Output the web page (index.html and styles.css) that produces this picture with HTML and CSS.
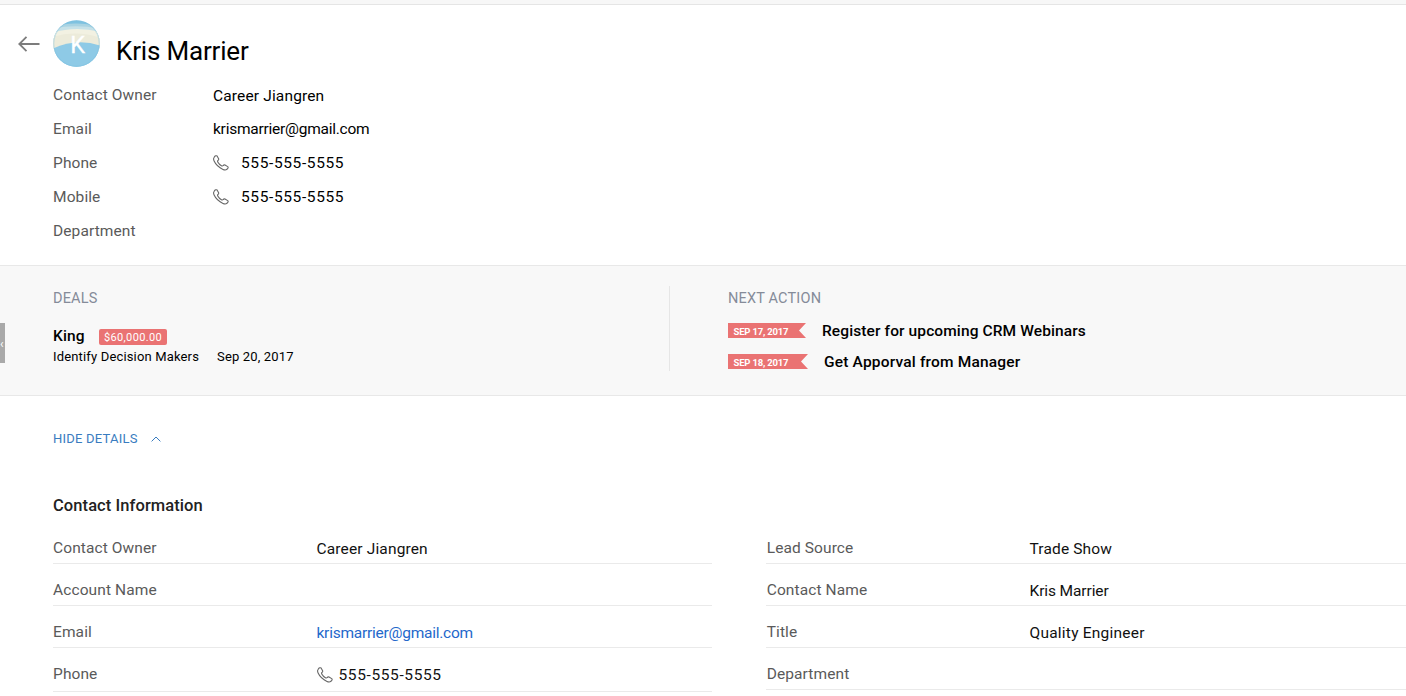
FILE: index.html
```html
<!DOCTYPE html>
<html lang="en">
<head>
<meta charset="utf-8">
<title>Kris Marrier</title>
<link rel="stylesheet" href="styles.css">
</head>
<body>
<svg class="defs" width="0" height="0" aria-hidden="true">
  <symbol id="phone" viewBox="0 0 16 16">
    <path d="M1.200 2.200C2 .9 3.400.3 4.100 1l1.500 2.700c.4.8-.1 1.300-.7 1.800-.6.5-.4 1 0 1.700.8 1.400 2 2.600 3.500 3.500.7.4 1.200.5 1.700 0 .5-.7 1.100-1 1.900-.6l2.700 1.500c.9.600.3 1.900-.8 2.700-1 .8-2.400.8-3.900.1C5.500 12.500 2.700 9.500 1.100 6.100.4 4.600.4 3.300 1.200 2.200z"/>
  </symbol>
</svg>
<div class="topbar"></div>
<header class="header">
  <svg class="back" viewBox="0 0 22 16"><path d="M8.500 .8 1.300 8l7.200 7.200M1.300 8H21.500"/></svg>
  <div class="head-main">
    <div class="identity">
      <div class="avatar">
        <svg class="avatar-art" viewBox="0 0 48 48">
          <defs><clipPath id="disc"><circle cx="24" cy="24" r="23.700"/></clipPath></defs>
          <g clip-path="url(#disc)">
            <rect width="48" height="48" fill="#7fc2e0"/>
            <path d="M0 7Q22 0 48 7V20H0z" fill="#a9d3e2"/>
            <path d="M0 9Q22 4 48 9V20H0z" fill="#c6e1e8"/>
            <path d="M0 13Q22 6 48 12V34H0z" fill="#f2f1e2"/>
            <path d="M0 17Q24 10 48 18V34H0z" fill="#ecebda"/>
            <path d="M0 29Q24 18 48 26V48H0z" fill="#8ecae6"/>
          </g>
          <circle cx="24" cy="24" r="23.200" fill="none" stroke="#7cbfdf" stroke-opacity=".4"/>
        </svg>
        <span class="avatar-letter">K</span>
      </div>
      <h1 class="name">Kris Marrier</h1>
    </div>
    <dl class="facts">
      <div class="fact"><dt class="label">Contact Owner</dt><dd class="value low">Career Jiangren</dd></div>
      <div class="fact"><dt class="label">Email</dt><dd class="value mail">krismarrier@gmail.com</dd></div>
      <div class="fact"><dt class="label">Phone</dt><dd class="value tel"><svg class="phone"><use href="#phone"/></svg>555-555-5555</dd></div>
      <div class="fact"><dt class="label">Mobile</dt><dd class="value tel"><svg class="phone"><use href="#phone"/></svg>555-555-5555</dd></div>
      <div class="fact"><dt class="label">Department</dt><dd class="value"></dd></div>
    </dl>
  </div>
</header>
<section class="summary">
  <div class="handle">‹</div>
  <div class="deals">
    <h2 class="caption">DEALS</h2>
    <div class="deal"><span class="deal-name">King</span><span class="amount">$60,000.00</span></div>
    <div class="deal-meta"><span class="stage">Identify Decision Makers</span><span class="close-date">Sep 20, 2017</span></div>
  </div>
  <div class="actions">
    <h2 class="caption wide">NEXT ACTION</h2>
    <div class="action"><span class="flag">SEP 17, 2017</span><span class="task">Register for upcoming CRM Webinars</span></div>
    <div class="action"><span class="flag later">SEP 18, 2017</span><span class="task approval">Get Apporval from Manager</span></div>
  </div>
</section>
<main class="details">
  <div class="toggle">HIDE DETAILS<svg class="chevron" viewBox="0 0 10 6"><path d="M.6 5.400 5 1l4.400 4.400"/></svg></div>
  <h2 class="section-title">Contact Information</h2>
  <div class="columns">
    <dl class="column">
      <div class="row"><dt class="label">Contact Owner</dt><dd class="value">Career Jiangren</dd></div>
      <div class="row"><dt class="label">Account Name</dt><dd class="value"></dd></div>
      <div class="row"><dt class="label">Email</dt><dd class="value mail link">krismarrier@gmail.com</dd></div>
      <div class="row tall"><dt class="label">Phone</dt><dd class="value tel"><svg class="phone"><use href="#phone"/></svg>555-555-5555</dd></div>
    </dl>
    <dl class="column second">
      <div class="row"><dt class="label">Lead Source</dt><dd class="value">Trade Show</dd></div>
      <div class="row"><dt class="label">Contact Name</dt><dd class="value person">Kris Marrier</dd></div>
      <div class="row"><dt class="label">Title</dt><dd class="value job">Quality Engineer</dd></div>
      <div class="row"><dt class="label">Department</dt><dd class="value"></dd></div>
    </dl>
  </div>
</main>
</body>
</html>
```

FILE: styles.css
```css
* { box-sizing: border-box; }
body, h1, h2, dl, dd { margin: 0; }
body {
  height: 696px;
  overflow: hidden;
  background: #fff;
  color: #000;
  font: 15.5px/20px Roboto, "Liberation Sans", sans-serif;
  white-space: nowrap;
}
.defs { position: absolute; }
.topbar { height: 5px; background: #f7f7f7; border-bottom: 1px solid #e5e5e5; }

.header { display: flex; height: 260px; padding: 15px 0 0 18px; }
.back { width: 22px; height: 16px; margin: 16px 13px 0 0; fill: none; stroke: #7c7c7c; stroke-width: 1.8; }
.identity { display: flex; gap: 16px; }
.avatar { display: grid; width: 47px; height: 47px; }
.avatar-art { grid-area: 1 / 1; width: 47px; height: 47px; }
.avatar-letter { grid-area: 1 / 1; z-index: 1; align-self: center; justify-self: center; color: #fff; font-size: 23.5px; padding: 3px 0 0 2px; -webkit-text-stroke: .3px #fff; }
.name { padding-top: 16px; font-size: 26px; line-height: 30px; font-weight: 400; letter-spacing: -.18px; }

.facts { padding-top: 11px; }
.fact { display: flex; height: 34px; line-height: 34px; }
.facts .label { width: 160px; }
.label { color: #5a5a5a; letter-spacing: .1px; }
.value { letter-spacing: .15px; }
.low { padding-top: 1px; }
.mail { letter-spacing: -.24px; }
.person { letter-spacing: -.1px; }
.job { letter-spacing: .23px; }
.tel { display: flex; align-items: center; letter-spacing: .62px; }
.phone { width: 16px; height: 16px; margin-right: 12px; fill: none; stroke: #666; stroke-width: 1.1; }

.summary { position: relative; display: flex; height: 131px; background: #f8f8f8; border: solid #e8e8e8; border-width: 1px 0; padding: 20px 0 24px 53px; }
.handle { position: absolute; left: 0; top: 57px; width: 5px; height: 40px; background: #a9a9a9; color: #fff; font-size: 12px; line-height: 42px; overflow: hidden; }
.deals { width: 617px; border-right: 1px solid #e6e6e6; }
.actions { padding-left: 58px; }
.caption { height: 22px; padding-top: 3px; font-size: 14.5px; line-height: 20px; font-weight: 400; color: #858b99; letter-spacing: .18px; }
.deal { display: flex; align-items: center; height: 20px; margin-top: 18px; }
.deal-name { width: 46px; font-weight: 500; letter-spacing: .1px; }
.amount { width: 68px; height: 16px; margin-top: 2px; border-radius: 2px; background: #ea7373; color: #fff; text-align: center; font-size: 11px; line-height: 17px; letter-spacing: .35px; }
.deal-meta { display: flex; padding-top: 1px; font-size: 13px; letter-spacing: .16px; }
.stage { width: 164px; }
.action { display: flex; gap: 16px; height: 31px; }
.wide + .action { margin-top: 13px; }
.flag { width: 78px; height: 15px; margin-top: 2px; padding-left: 5.5px; background: #ea7373; clip-path: polygon(0 0, 100% 0, calc(100% - 7px) 50%, 100% 100%, 0 100%); color: #fff; font-size: 9.5px; line-height: 17px; font-weight: 700; letter-spacing: -.2px; }
.later { width: 80px; }
.task { font-weight: 500; letter-spacing: .11px; }
.approval { letter-spacing: .18px; }

.details { padding: 33px 0 0 53px; }
.toggle { display: flex; align-items: center; font-size: 13px; letter-spacing: .23px; color: #397cc0; }
.chevron { width: 10px; height: 6px; margin-left: 13px; fill: none; stroke: currentColor; }
.section-title { margin-top: 46px; font-size: 16.5px; line-height: 22px; font-weight: 500; letter-spacing: .08px; color: #222; }
.columns { display: grid; grid-template-columns: 659px 640px; column-gap: 54px; padding-top: 5px; }
.row { display: flex; height: 42px; padding-top: 16px; border-bottom: 1px solid #eaeaea; }
.tall { height: 44px; }
.row .label { width: 263.5px; }
.second .label { padding-left: .7px; }
.row .value { height: 20px; margin-top: 1px; color: #111; }
.row .phone { margin-right: 6px; }
.row .link { color: #2468cb; }
```
